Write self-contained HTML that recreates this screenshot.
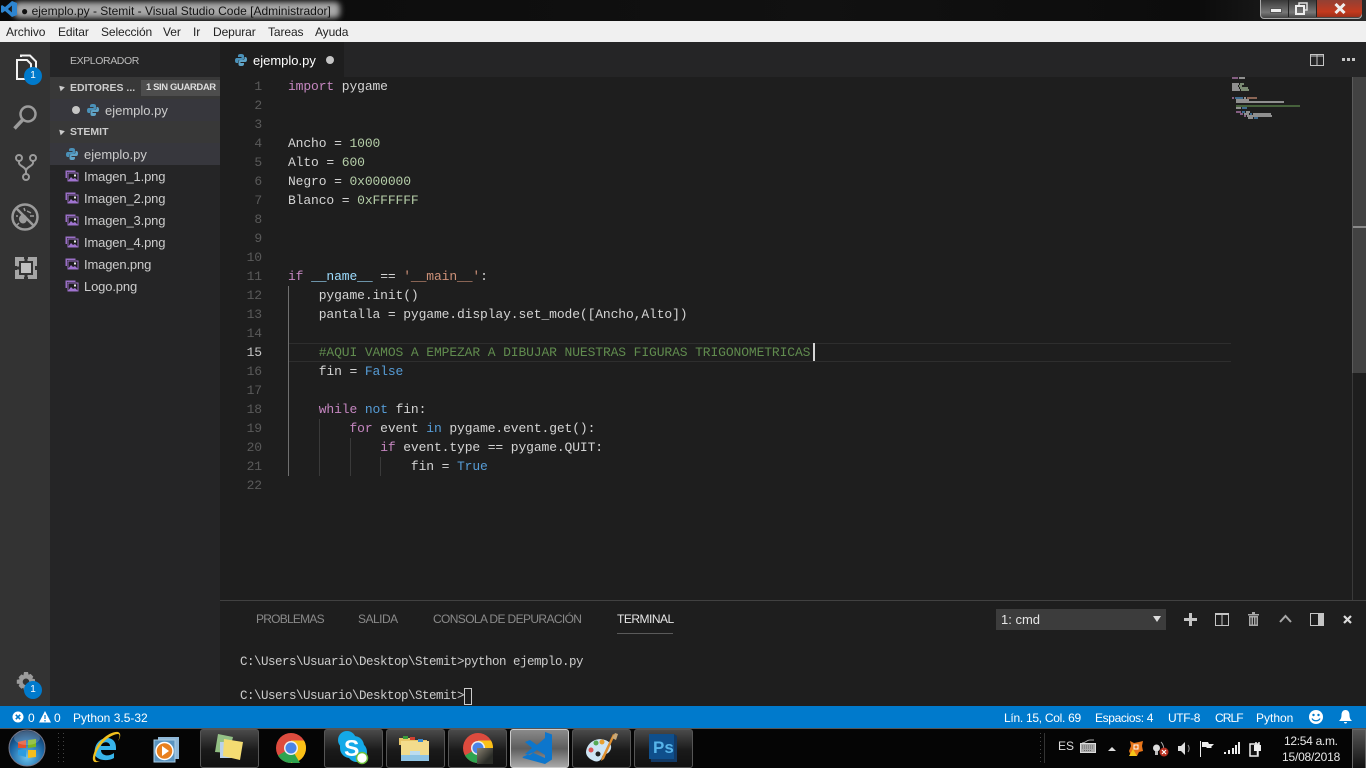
<!DOCTYPE html>
<html lang="es"><head><meta charset="utf-8"><title>ejemplo.py - Stemit</title>
<style>
html,body{margin:0;padding:0;width:1366px;height:768px;overflow:hidden;background:#1e1e1e}
body{position:relative;font-family:"Liberation Sans",sans-serif;font-size:12px;color:#ccc}
.a,.t,.c,.n,svg{position:absolute}
.t{white-space:nowrap;line-height:16px}
.c{white-space:pre;font-family:"Liberation Mono",monospace;font-size:13px;letter-spacing:-.12px;line-height:19px;left:288px;color:#d4d4d4;height:19px}
.n{white-space:pre;font-family:"Liberation Mono",monospace;font-size:13px;letter-spacing:-.12px;line-height:19px;left:220px;width:42px;text-align:right;color:#5a5a5a}
.k{color:#c586c0}.b{color:#569cd6}.u{color:#b5cea8}.s{color:#ce9178}.g{color:#608b4e}.v{color:#9cdcfe}
.m{top:24px;color:#222;font-size:12px;letter-spacing:-.1px}
.f{left:84px;color:#ccc;font-size:13px;letter-spacing:-.15px}
.tb{top:729px;width:57px;height:37px;border:1px solid #555;border-radius:3px;background:linear-gradient(#4a4a4a,#1a1a1a 55%,#111)}
.h{font-size:12px;color:#8a8a8a;letter-spacing:-.65px}
.st{top:710px;color:#fff}
</style></head><body>
<!-- title bar -->
<div class="a" style="left:0;top:0;width:1366px;height:21px;background:linear-gradient(90deg,#0a0a0a,#111 60%,#0c0c0c 88%,#2a2a2a)"></div>
<div class="a" style="left:14px;top:2px;width:326px;height:16px;background:#a8a8a8;filter:blur(3px);border-radius:5px"></div>
<svg style="left:1px;top:0" width="16" height="18" viewBox="0 0 16 18"><path d="M11 1l5 2v12l-5 2-7-6-3 2-1-1v-6l1-1 3 2zM11 5.500l-4 3.500 4 3.500z" fill="#2d85d0"/></svg>
<div class="t" style="left:21px;top:3px;color:#111;font-size:12px">● ejemplo.py - Stemit - Visual Studio Code [Administrador]</div>
<!-- window controls -->
<div class="a" style="left:1260px;top:-2px;width:100px;height:19px;border:1px solid #aaa;border-radius:0 0 4px 4px;background:linear-gradient(#333,#777 70%,#444)"></div>
<div class="a" style="left:1316px;top:-1px;width:45px;height:18px;background:linear-gradient(#8d4136,#c33a1e 70%,#9c2f1a);border-left:1px solid #222;border-radius:0 0 4px 0"></div>
<div class="a" style="left:1288px;top:-1px;width:1px;height:18px;background:#222"></div>
<div class="a" style="left:1270px;top:8px;width:10px;height:3px;background:#eee;border:1px solid #555"></div>
<svg style="left:1295px;top:2px" width="14" height="13" viewBox="0 0 14 13"><path d="M4 3V1h8v7h-2" fill="none" stroke="#ddd" stroke-width="1.500"/><rect x="1" y="4" width="8" height="8" fill="none" stroke="#eee" stroke-width="2"/></svg>
<svg style="left:1334px;top:3px" width="12" height="11" viewBox="0 0 12 11"><path d="M1.500 1l9 9M10.500 1l-9 9" stroke="#eee" stroke-width="3"/></svg>
<!-- menu -->
<div class="a" style="left:0;top:21px;width:1366px;height:21px;background:#f0f0f0"></div>
<div class="t m" style="left:6px">Archivo</div><div class="t m" style="left:58px">Editar</div><div class="t m" style="left:101px">Selección</div><div class="t m" style="left:163px">Ver</div><div class="t m" style="left:193px">Ir</div><div class="t m" style="left:213px">Depurar</div><div class="t m" style="left:268px">Tareas</div><div class="t m" style="left:315px">Ayuda</div>
<!-- activity bar -->
<div class="a" style="left:0;top:42px;width:50px;height:664px;background:#333"></div>
<svg style="left:14px;top:54px" width="24" height="28" viewBox="0 0 24 28" fill="none" stroke="#f2f2f2" stroke-width="2"><path d="M7 3V1.500h9l6 6V20"/><path d="M3 6h10l4 4v15H3z"/></svg>
<div class="a" style="left:24px;top:67px;width:18px;height:18px;border-radius:50%;background:#007acc;color:#fff;font-size:10px;line-height:18px;text-align:center">1</div>
<svg style="left:12px;top:103px" width="26" height="28" viewBox="0 0 26 28" fill="none" stroke="#9b9b9b"><circle cx="16" cy="11" r="7.500" stroke-width="2.500"/><path d="M10.500 17L2.500 25.500" stroke-width="3.500"/></svg>
<svg style="left:14px;top:153px" width="24" height="29" viewBox="0 0 24 29" fill="none" stroke="#9b9b9b" stroke-width="2"><circle cx="5" cy="5" r="3"/><circle cx="19" cy="5" r="3"/><circle cx="12" cy="24" r="3"/><path d="M5 8v2c0 3 7 4 7 8v3M19 8v2c0 3-7 4-7 8"/></svg>
<svg style="left:11px;top:202px" width="28" height="30" viewBox="0 0 28 30" fill="none" stroke="#9b9b9b"><circle cx="14" cy="15" r="12.500" stroke-width="2.500"/><path d="M5 6l18 18" stroke-width="2.500"/><ellipse cx="12" cy="17" rx="4" ry="4.500" fill="#9b9b9b" stroke="none"/><path d="M16 9l4 2M7 14l-2 0M8 21l-2 2M13 6l1 3M19 14h4" stroke-width="1.500"/></svg>
<svg style="left:15px;top:257px" width="22" height="22" viewBox="0 0 22 22"><path d="M0 0h9v2h4V0h9v9h-2v4h2v9h-9v-2H9v2H0v-9h2V9H0z" fill="#a5a5a5"/><rect x="5" y="5" width="12" height="12" fill="#c0c0c0" stroke="#333" stroke-width="2"/><path d="M9.500 0h3v4h-3zM0 9.500h4v3H0zM9.500 18h3v4h-3z" fill="#333"/></svg>
<svg style="left:15px;top:671px" width="22" height="22" viewBox="0 0 22 22"><path fill="#9b9b9b" fill-rule="evenodd" d="M9 1h4l.6 2.800 2-.9 2.700 2.700-1 2 2.700.6v4l-2.800.6 1 2-2.800 2.800-2-1-.5 2.900H9l-.6-2.800-2 1-2.800-2.800 1-2L1.800 12.800v-4l2.800-.6-1-2 2.800-2.800 2 1zM11 7.500a3.300 3.300 0 100 6.600 3.300 3.300 0 000-6.600z"/></svg>
<div class="a" style="left:24px;top:681px;width:18px;height:18px;border-radius:50%;background:#007acc;color:#fff;font-size:10px;line-height:18px;text-align:center">1</div>
<!-- sidebar -->
<div class="a" style="left:50px;top:42px;width:170px;height:664px;background:#252526"></div>
<div class="t" style="left:70px;top:53px;font-size:10.500px;letter-spacing:-.4px;color:#bbb">EXPLORADOR</div>
<div class="a" style="left:50px;top:77px;width:170px;height:22px;background:#383838"></div>
<div class="a" style="left:50px;top:99px;width:170px;height:22px;background:#37373d"></div>
<div class="a" style="left:50px;top:121px;width:170px;height:22px;background:#383838"></div>
<div class="a" style="left:50px;top:143px;width:170px;height:22px;background:#37373d"></div>
<div class="a" style="left:58px;top:85px;width:0;height:0;border-left:3px solid transparent;border-right:3px solid transparent;border-bottom:5px solid #ccc;transform:rotate(-45deg)"></div>
<div class="a" style="left:58px;top:129px;width:0;height:0;border-left:3px solid transparent;border-right:3px solid transparent;border-bottom:5px solid #ccc;transform:rotate(-45deg)"></div>
<div class="t" style="left:70px;top:80px;font-size:10.500px;font-weight:bold;color:#ccc">EDITORES ...</div>
<div class="a" style="left:141px;top:80px;width:79px;height:16px;background:#4d4d4d"></div>
<div class="t" style="left:146px;top:80px;font-size:9.500px;color:#ddd;letter-spacing:-.4px;font-weight:bold">1 SIN GUARDAR</div>
<div class="a" style="left:72px;top:106px;width:8px;height:8px;border-radius:50%;background:#c5c5c5"></div>
<svg style="left:87px;top:104px" width="12" height="12" viewBox="0 0 12 12"><path d="M6 0C3 0 3 1 3 3h3.500v1H2C.5 4 0 5 0 6.500S.5 9 2 9h1V7.500C3 6.500 4 6 5 6h2c1 0 2-.5 2-1.500V2C9 .5 8 0 6 0z" fill="#4a90b8"/><path d="M6 12c3 0 3-1 3-3H5.500V8H10c1.500 0 2-1 2-2.500S11.500 3 10 3H9.500v1.500C9.500 5.500 8.500 6 7.500 6h-2C4.500 6 3.500 6.500 3.500 7.500V10C3.500 11.500 4 12 6 12z" fill="#5fa3c7"/></svg>
<div class="t" style="left:105px;top:103px;font-size:13px;color:#ccc">ejemplo.py</div>
<div class="t" style="left:70px;top:124px;font-size:10.500px;font-weight:bold;color:#ccc">STEMIT</div>
<svg style="left:66px;top:148px" width="12" height="12" viewBox="0 0 12 12"><path d="M6 0C3 0 3 1 3 3h3.500v1H2C.5 4 0 5 0 6.500S.5 9 2 9h1V7.500C3 6.500 4 6 5 6h2c1 0 2-.5 2-1.500V2C9 .5 8 0 6 0z" fill="#4a90b8"/><path d="M6 12c3 0 3-1 3-3H5.500V8H10c1.500 0 2-1 2-2.500S11.500 3 10 3H9.500v1.500C9.500 5.500 8.500 6 7.500 6h-2C4.500 6 3.500 6.500 3.500 7.500V10C3.500 11.500 4 12 6 12z" fill="#5fa3c7"/></svg>
<div class="t f" style="top:147px;letter-spacing:0">ejemplo.py</div>
<svg width="0" height="0"><defs><g id="img"><path d="M.5.500h10v1.500H2v6H.5z" fill="#9a6fc7"/><rect x="3" y="3" width="10" height="8" fill="#1e1e1e"/><path d="M3 3h10v8H3z" fill="none" stroke="#9a6fc7"/><path d="M3 11l3-4 2 2 2-1 3 3z" fill="#a074d0"/><rect x="9" y="4.500" width="2" height="2" fill="#eee"/></g></defs></svg>
<svg style="left:65px;top:170px" width="14" height="12"><use href="#img"/></svg><div class="t f" style="top:169px">Imagen_1.png</div>
<svg style="left:65px;top:192px" width="14" height="12"><use href="#img"/></svg><div class="t f" style="top:191px">Imagen_2.png</div>
<svg style="left:65px;top:214px" width="14" height="12"><use href="#img"/></svg><div class="t f" style="top:213px">Imagen_3.png</div>
<svg style="left:65px;top:236px" width="14" height="12"><use href="#img"/></svg><div class="t f" style="top:235px">Imagen_4.png</div>
<svg style="left:65px;top:258px" width="14" height="12"><use href="#img"/></svg><div class="t f" style="top:257px">Imagen.png</div>
<svg style="left:65px;top:280px" width="14" height="12"><use href="#img"/></svg><div class="t f" style="top:279px">Logo.png</div>
<!-- tabs -->
<div class="a" style="left:220px;top:42px;width:1146px;height:35px;background:#252526"></div>
<div class="a" style="left:220px;top:42px;width:124px;height:35px;background:#1e1e1e"></div>
<svg style="left:235px;top:54px" width="12" height="12" viewBox="0 0 12 12"><path d="M6 0C3 0 3 1 3 3h3.500v1H2C.5 4 0 5 0 6.500S.5 9 2 9h1V7.500C3 6.500 4 6 5 6h2c1 0 2-.5 2-1.500V2C9 .5 8 0 6 0z" fill="#4a90b8"/><path d="M6 12c3 0 3-1 3-3H5.500V8H10c1.500 0 2-1 2-2.500S11.500 3 10 3H9.500v1.500C9.500 5.500 8.500 6 7.500 6h-2C4.500 6 3.500 6.500 3.500 7.500V10C3.500 11.500 4 12 6 12z" fill="#5fa3c7"/></svg>
<div class="t" style="left:253px;top:53px;font-size:13px;color:#fff">ejemplo.py</div>
<div class="a" style="left:326px;top:56px;width:8px;height:8px;border-radius:50%;background:#c5c5c5"></div>
<svg style="left:1310px;top:54px" width="14" height="12"><rect x=".5" y=".5" width="13" height="11" fill="none" stroke="#c5c5c5"/><path d="M.5 2h13M7 1v11" stroke="#c5c5c5" fill="none"/></svg>
<div class="a" style="left:1342px;top:58px;width:3px;height:3px;background:#c5c5c5;box-shadow:5px 0 #c5c5c5,10px 0 #c5c5c5"></div>
<!-- current line -->
<div class="a" style="left:288px;top:343px;width:943px;height:17px;border-top:1px solid #2e2e2e;border-bottom:1px solid #2e2e2e"></div>
<div class="a" style="left:288px;top:286px;width:1px;height:190px;background:#707070"></div>
<div class="a" style="left:319px;top:419px;width:1px;height:57px;background:#3a3a3a"></div>
<div class="a" style="left:350px;top:438px;width:1px;height:38px;background:#3a3a3a"></div>
<div class="a" style="left:380px;top:457px;width:1px;height:19px;background:#3a3a3a"></div>
<!-- line numbers -->
<div class="n" style="top:77px">1</div><div class="n" style="top:96px">2</div><div class="n" style="top:115px">3</div><div class="n" style="top:134px">4</div><div class="n" style="top:153px">5</div><div class="n" style="top:172px">6</div><div class="n" style="top:191px">7</div><div class="n" style="top:210px">8</div><div class="n" style="top:229px">9</div><div class="n" style="top:248px">10</div><div class="n" style="top:267px">11</div><div class="n" style="top:286px">12</div><div class="n" style="top:305px">13</div><div class="n" style="top:324px">14</div><div class="n" style="top:343px;color:#c6c6c6">15</div><div class="n" style="top:362px">16</div><div class="n" style="top:381px">17</div><div class="n" style="top:400px">18</div><div class="n" style="top:419px">19</div><div class="n" style="top:438px">20</div><div class="n" style="top:457px">21</div><div class="n" style="top:476px">22</div>
<!-- code -->
<div class="c" style="top:77px"><span class="k">import</span> pygame</div>
<div class="c" style="top:134px">Ancho = <span class="u">1000</span></div>
<div class="c" style="top:153px">Alto = <span class="u">600</span></div>
<div class="c" style="top:172px">Negro = <span class="u">0x000000</span></div>
<div class="c" style="top:191px">Blanco = <span class="u">0xFFFFFF</span></div>
<div class="c" style="top:267px"><span class="k">if</span> <span class="v">__name__</span> == <span class="s">'__main__'</span>:</div>
<div class="c" style="top:286px">    pygame.init()</div>
<div class="c" style="top:305px">    pantalla = pygame.display.set_mode([Ancho,Alto])</div>
<div class="c" style="top:343px">    <span class="g">#AQUI VAMOS A EMPEZAR A DIBUJAR NUESTRAS FIGURAS TRIGONOMETRICAS</span></div>
<div class="a" style="left:813px;top:343px;width:2px;height:18px;background:#d4d4d4"></div>
<div class="c" style="top:362px">    fin = <span class="b">False</span></div>
<div class="c" style="top:400px">    <span class="k">while</span> <span class="b">not</span> fin:</div>
<div class="c" style="top:419px">        <span class="k">for</span> event <span class="b">in</span> pygame.event.get():</div>
<div class="c" style="top:438px">            <span class="k">if</span> event.type == pygame.QUIT:</div>
<div class="c" style="top:457px">                fin = <span class="b">True</span></div>
<!-- minimap -->
<svg style="left:1232px;top:77px" width="70" height="44" viewBox="0 0 70 44" shape-rendering="crispEdges" opacity=".62">
<g fill="#c586c0"><rect x="0" y="0" width="6" height="2"/><rect x="0" y="20" width="2" height="2"/><rect x="4" y="34" width="5" height="2"/><rect x="8" y="36" width="3" height="2"/><rect x="12" y="38" width="2" height="2"/></g>
<g fill="#d4d4d4"><rect x="7" y="0" width="6" height="2"/><rect x="0" y="6" width="7" height="2"/><rect x="0" y="8" width="6" height="2"/><rect x="0" y="10" width="7" height="2"/><rect x="0" y="12" width="8" height="2"/><rect x="12" y="20" width="2" height="2"/><rect x="4" y="22" width="13" height="2"/><rect x="4" y="24" width="48" height="2"/><rect x="4" y="30" width="5" height="2"/><rect x="14" y="34" width="4" height="2"/><rect x="12" y="36" width="5" height="2"/><rect x="21" y="36" width="18" height="2"/><rect x="15" y="38" width="25" height="2"/><rect x="16" y="40" width="5" height="2"/></g>
<g fill="#b5cea8"><rect x="8" y="6" width="4" height="2"/><rect x="7" y="8" width="3" height="2"/><rect x="8" y="10" width="8" height="2"/><rect x="9" y="12" width="8" height="2"/></g>
<rect x="4" y="28" width="64" height="2" fill="#608b4e"/>
<g fill="#569cd6"><rect x="3" y="20" width="8" height="2"/><rect x="10" y="30" width="5" height="2"/><rect x="10" y="34" width="3" height="2"/><rect x="18" y="36" width="2" height="2"/><rect x="22" y="40" width="4" height="2"/></g>
<rect x="15" y="20" width="10" height="2" fill="#ce9178"/>
</svg>
<!-- scrollbar -->
<div class="a" style="left:1352px;top:77px;width:1px;height:523px;background:#3a3a3a"></div>
<div class="a" style="left:1352px;top:77px;width:14px;height:296px;background:#424242;border-left:1px solid #5a5a5a;box-sizing:border-box"></div>
<div class="a" style="left:1353px;top:226px;width:13px;height:2px;background:#8a8a8a"></div>
<!-- panel -->
<div class="a" style="left:220px;top:600px;width:1146px;height:106px;background:#1e1e1e;border-top:1px solid #414141;box-sizing:border-box"></div>
<div class="t h" style="left:256px;top:611px;letter-spacing:-.75px">PROBLEMAS</div>
<div class="t h" style="left:358px;top:611px;letter-spacing:-.5px">SALIDA</div>
<div class="t h" style="left:433px;top:611px;letter-spacing:-.62px">CONSOLA DE DEPURACIÓN</div>
<div class="t h" style="left:617px;top:611px;color:#e7e7e7;letter-spacing:-.5px">TERMINAL</div>
<div class="a" style="left:617px;top:633px;width:56px;height:1px;background:#5a5a5a"></div>
<div class="a" style="left:996px;top:609px;width:170px;height:21px;background:#3c3c3c"></div>
<div class="t" style="left:1001px;top:612px;font-size:13px;color:#e6e6e6">1: cmd</div>
<div class="a" style="left:1153px;top:616px;width:0;height:0;border-left:4px solid transparent;border-right:4px solid transparent;border-top:6px solid #ddd"></div>
<svg style="left:1184px;top:613px" width="13" height="13"><path d="M5 0h3v5h5v3H8v5H5V8H0V5h5z" fill="#c5c5c5"/></svg>
<svg style="left:1215px;top:613px" width="14" height="13" fill="none" stroke="#c5c5c5"><rect x=".5" y=".5" width="13" height="12"/><path d="M0 1.500h14M7 1v12"/></svg>
<svg style="left:1248px;top:612px" width="11" height="14" viewBox="0 0 11 14"><path d="M0 2h11v1.500H0zM4 0h3v2H4zM1 4h9v10H1z" fill="#a8a8a8"/><path d="M3 5.500v7M5.500 5.500v7M8 5.500v7" stroke="#1e1e1e"/></svg>
<svg style="left:1279px;top:614px" width="13" height="9" fill="none" stroke="#a8a8a8" stroke-width="2"><path d="M1 8l5.500-6L12 8"/></svg>
<svg style="left:1310px;top:613px" width="14" height="13"><rect x=".5" y=".5" width="13" height="12" fill="none" stroke="#c5c5c5"/><rect x="8" y="1" width="6" height="11" fill="#c5c5c5"/></svg>
<svg style="left:1343px;top:615px" width="9" height="9"><path d="M1 1l7 7M8 1L1 8" stroke="#dcdcdc" stroke-width="2.200"/></svg>
<div class="c" style="left:240px;top:653px;font-size:12.500px;letter-spacing:-.5px;color:#ccc">C:\Users\Usuario\Desktop\Stemit&gt;python ejemplo.py</div>
<div class="c" style="left:240px;top:687px;font-size:12.500px;letter-spacing:-.5px;color:#ccc">C:\Users\Usuario\Desktop\Stemit&gt;</div>
<div class="a" style="left:464px;top:688px;width:6px;height:15px;border:1px solid #ccc"></div>
<!-- status bar -->
<div class="a" style="left:0;top:706px;width:1366px;height:22px;background:#007acc"></div>
<svg style="left:12px;top:711px" width="12" height="12"><circle cx="6" cy="6" r="5.500" fill="#fff"/><path d="M3.800 3.800l4.400 4.400M8.200 3.800L3.800 8.200" stroke="#007acc" stroke-width="1.600"/></svg>
<div class="t st" style="left:28px">0</div>
<svg style="left:39px;top:711px" width="12" height="12"><path d="M6 0l6 11.500H0z" fill="#fff"/><path d="M6 4v4M6 9v1.500" stroke="#007acc" stroke-width="1.200"/></svg>
<div class="t st" style="left:54px">0</div>
<div class="t st" style="left:73px">Python 3.5-32</div>
<div class="t st" style="left:1004px;letter-spacing:-.28px">Lín. 15, Col. 69</div>
<div class="t st" style="left:1095px;letter-spacing:-.36px">Espacios: 4</div>
<div class="t st" style="left:1168px;letter-spacing:-.4px">UTF-8</div>
<div class="t st" style="left:1215px;letter-spacing:-.9px">CRLF</div>
<div class="t st" style="left:1256px">Python</div>
<svg style="left:1309px;top:710px" width="14" height="14"><circle cx="7" cy="7" r="7" fill="#fff"/><circle cx="4.500" cy="5" r="1.200" fill="#007acc"/><circle cx="9.500" cy="5" r="1.200" fill="#007acc"/><path d="M3 8.500c1.500 3 6.500 3 8 0" fill="none" stroke="#007acc" stroke-width="1.300"/></svg>
<svg style="left:1339px;top:710px" width="13" height="14"><path d="M6.500 0C9 0 10.500 2 10.500 5c0 3 1 4.500 2.500 6H0c1.500-1.500 2.500-3 2.500-6 0-3 1.500-5 4-5zM5 12h3a1.500 1.500 0 01-3 0z" fill="#fff"/></svg>
<!-- taskbar -->
<div class="a" style="left:0;top:728px;width:1366px;height:40px;background:#050505;border-top:1px solid #555;box-sizing:border-box"></div>
<svg style="left:8px;top:729px" width="38" height="38" viewBox="0 0 38 38"><defs><radialGradient id="o" cx=".5" cy=".75" r=".75"><stop offset="0" stop-color="#6cc4ee"/><stop offset=".6" stop-color="#1f6aa8"/><stop offset="1" stop-color="#0d2f57"/></radialGradient></defs><circle cx="19" cy="19" r="18" fill="url(#o)" stroke="#778" stroke-width="1"/><path d="M10 13l8-2v8h-8z" fill="#e2502c"/><path d="M20 11l8-1v8l-8 1z" fill="#7db51e"/><path d="M10 21h8v7l-8-2z" fill="#2b9ce0"/><path d="M20 21h8v7l-8 1z" fill="#f5be1b"/><ellipse cx="19" cy="9" rx="13" ry="7" fill="#fff" opacity=".2"/></svg>
<div class="a" style="left:58px;top:733px;width:1px;height:30px;background:repeating-linear-gradient(#444 0 1px,transparent 1px 4px)"></div>
<div class="a" style="left:63px;top:733px;width:1px;height:30px;background:repeating-linear-gradient(#444 0 1px,transparent 1px 4px)"></div>
<svg style="left:90px;top:731px" width="31" height="34" viewBox="0 0 31 34"><path d="M5 24C3 14 10 7 17 7c6 0 9 4 9 10v2H11c0 6 8 7 13 3l0 5c-7 4-17 2-19-3zM11 15h9c0-5-8-5-9 0z" fill="#38b4ea"/><path d="M28 1c-6-1-19 6-24 21-3 8 0 11 6 8-4 1-6-1-4-7C10 11 22 3 28 3c2 0 2 3 0 7 3-4 3-8 0-9z" fill="#f1c01d"/></svg>
<svg style="left:153px;top:736px" width="27" height="27" viewBox="0 0 27 27"><rect x="5" y="1" width="21" height="22" fill="#8fb8d8"/><rect x="1" y="4" width="21" height="22" fill="#5a94c0" stroke="#a8cce4"/><circle cx="11.500" cy="15" r="8.500" fill="#e8801e" stroke="#fff" stroke-width="1.500"/><path d="M9 10l7 5-7 5z" fill="#fff"/></svg>
<div class="a tb" style="left:200px"></div>
<svg style="left:212px;top:732px" width="34" height="32" viewBox="0 0 34 32"><path d="M6 2l15 3-4 16-14-1z" fill="#9fd08f" opacity=".9"/><rect x="8" y="10" width="14" height="16" fill="#b9d2ec"/><path d="M12 7l19 3-3 18-17-4z" fill="#f4dc72"/></svg>
<svg style="left:276px;top:733px" width="30" height="30" viewBox="0 0 30 30"><circle cx="15" cy="15" r="15" fill="#dd4b3e"/><path d="M15 15L2 22.500A15 15 0 0015 30z" fill="#2ea44f"/><path d="M15 15v15A15 15 0 0030 15 15 15 0 0028 7.500H15z" fill="#fbc116"/><path d="M15 15l-6 10a15 15 0 0015 5z" fill="#2ea44f"/><circle cx="15" cy="15" r="7" fill="#eee"/><circle cx="15" cy="15" r="5.500" fill="#4a84e8"/></svg>
<div class="a tb" style="left:324px"></div>
<svg style="left:337px;top:731px" width="32" height="34" viewBox="0 0 32 34"><circle cx="10" cy="9" r="9" fill="#14a9e8"/><circle cx="20" cy="21" r="10" fill="#14a9e8"/><rect x="3" y="5" width="24" height="22" rx="10" fill="#14a9e8"/><text x="7" y="25" font-family="Liberation Sans,sans-serif" font-size="23" font-weight="bold" fill="#fff">S</text><circle cx="25" cy="27" r="5.500" fill="#fff" stroke="#6bbf3a" stroke-width="1.500"/></svg>
<div class="a tb" style="left:386px"></div>
<svg style="left:398px;top:733px" width="34" height="30" viewBox="0 0 34 30"><path d="M1 5h12l2 2h14v5H1z" fill="#e8c668"/><path d="M3 8h28v20H3z" fill="#f3dc8c"/><rect x="5" y="3" width="5" height="3" fill="#3a9c3a"/><rect x="12" y="4" width="5" height="3" fill="#d04030"/><rect x="20" y="6" width="5" height="3" fill="#3a8ad0"/><path d="M3 22h28v6H3z" fill="#8fc4e4"/><path d="M12 18h10v4H12z" fill="#bcdcf0"/></svg>
<div class="a tb" style="left:448px"></div>
<svg style="left:463px;top:733px" width="30" height="30" viewBox="0 0 30 30"><circle cx="15" cy="15" r="15" fill="#dd4b3e"/><path d="M15 15L2 22.500A15 15 0 0015 30z" fill="#2ea44f"/><path d="M15 15v15A15 15 0 0030 15 15 15 0 0028 7.500H15z" fill="#fbc116"/><circle cx="15" cy="15" r="7" fill="#eee"/><circle cx="15" cy="15" r="5.500" fill="#4a84e8"/></svg>
<div class="a" style="left:477px;top:748px;width:16px;height:16px;background:linear-gradient(135deg,#8a8272,#2b2d28 70%)"></div>
<div class="a tb" style="left:510px;background:linear-gradient(#8a8a8a,#5d5d5d 50%,#a8a8a8);border-color:#ccc"></div>
<svg style="left:522px;top:732px" width="34" height="32" viewBox="0 0 34 32"><path d="M23 0l7 2.500v25L23 32 1 26l-.5-1 10-4.500L23 26zM23 6l-8 7-7-5-5 2 7 6-7 6 5 1 7-5 8 5z" fill="#0d76cc"/></svg>
<div class="a tb" style="left:572px"></div>
<svg style="left:585px;top:732px" width="34" height="33" viewBox="0 0 34 33"><path d="M1 20C2 10 12 5 20 8c7 2 8 9 3 13-3 2-5 1-6 4-1 4-5 6-10 3-4-2-6-5-6-8z" fill="#cde4f3"/><circle cx="6" cy="18" r="2.500" fill="#d55"/><circle cx="11" cy="11" r="2.500" fill="#5a5"/><circle cx="17" cy="10" r="2.500" fill="#e8a030"/><circle cx="13" cy="22" r="2.500" fill="#222"/><path d="M30 3L19 27l-3 2 1-4L28 2z" fill="#e09030"/><path d="M27 6l3-5 3 1-2 6z" fill="#c8a878"/></svg>
<div class="a tb" style="left:634px"></div>
<svg style="left:648px;top:733px" width="30" height="29" viewBox="0 0 30 29"><path d="M1 1h25l3 2v26H3z" fill="#123a66"/><rect x="1" y="1" width="25" height="25" fill="#0f4f8c"/><text x="5" y="20" font-family="Liberation Sans,sans-serif" font-size="17" font-weight="bold" fill="#56b4ea">Ps</text></svg>
<!-- tray -->
<div class="a" style="left:1040px;top:733px;width:1px;height:30px;background:repeating-linear-gradient(#444 0 1px,transparent 1px 4px);box-shadow:4px 0 0 #333"></div>
<div class="t" style="left:1058px;top:738px;color:#ddd;font-size:12px">ES</div>
<svg style="left:1080px;top:738px" width="16" height="16" viewBox="0 0 16 16"><path d="M2 5c4 0 4-3 8-3h4" fill="none" stroke="#aaa"/><rect x=".5" y="5.500" width="15" height="9" fill="#aaa" stroke="#ddd"/><path d="M2 8h12M2 10h12M4 12.500h8" stroke="#666" stroke-dasharray="1 1"/></svg>
<div class="a" style="left:1108px;top:747px;width:0;height:0;border-left:4px solid transparent;border-right:4px solid transparent;border-bottom:4px solid #ddd"></div>
<svg style="left:1128px;top:740px" width="16" height="17" viewBox="0 0 16 17"><path d="M2 1l4 2 5-1 4-1-1 5 1 5-4 1-2 4H3L1 11l2-5z" fill="#e8761a"/><rect x="6" y="5" width="4" height="4" fill="none" stroke="#fff"/><path d="M5 9l4 7H1z" fill="#f5c518"/></svg>
<svg style="left:1152px;top:741px" width="17" height="16" viewBox="0 0 17 16"><circle cx="4.500" cy="7" r="3.500" fill="#ddd"/><rect x="3" y="10" width="3" height="4" fill="#bbb"/><path d="M9 1c3 3 3 6 2 9" fill="none" stroke="#aaa"/><circle cx="12" cy="11" r="4.500" fill="#b83020"/><path d="M10 9l4 4M14 9l-4 4" stroke="#fff" stroke-width="1.200"/></svg>
<svg style="left:1178px;top:741px" width="13" height="15" viewBox="0 0 13 15"><path d="M0 5h3l4-4v13l-4-4H0z" fill="#ddd"/><path d="M10 4c1.500 2 1.500 5 0 7" fill="none" stroke="#999"/></svg>
<svg style="left:1200px;top:741px" width="15" height="16" viewBox="0 0 15 16"><path d="M.5 0v16" stroke="#eee"/><path d="M2 1h6l1 2h5l-3 3 1 1H7L6 6H2z" fill="#eee"/></svg>
<svg style="left:1224px;top:742px" width="16" height="13"><path d="M0 10h2v2H0zM4 8h2v4H4zM8 6h2v6H8zM11 3h2v9h-2zM14 0h2v12h-2z" fill="#eee"/></svg>
<svg style="left:1249px;top:741px" width="14" height="16" viewBox="0 0 14 16"><rect x="1" y="3" width="8" height="12" fill="#111" stroke="#eee" stroke-width="1.500"/><rect x="5" y="4" width="7" height="6" fill="#eee"/><path d="M7 1v3M10 1v3M8.500 10v4" stroke="#eee" stroke-width="1.500"/></svg>
<div class="t" style="left:1284px;top:733px;color:#e8e8e8;font-size:12px;letter-spacing:-.3px">12:54 a.m.</div>
<div class="t" style="left:1282px;top:749px;color:#e8e8e8;font-size:12px;letter-spacing:-.2px">15/08/2018</div>
<div class="a" style="left:1352px;top:729px;width:12px;height:38px;border:1px solid #666;background:linear-gradient(#555,#111)"></div>
</body></html>
